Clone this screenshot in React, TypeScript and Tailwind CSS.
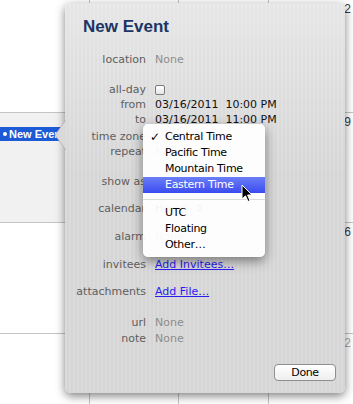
import React from 'react'

const weeks = [
    { h: 'h-[113px]', days: ['9', '10', '11', '12'] },
    { h: 'h-[110px]', days: ['16', '17', '18', '19'] },
    { h: 'h-[111px]', days: ['23', '24', '25', '26'] },
    { h: 'h-[80px]', days: ['30', '31', '1', '2'] },
]

const colWidths = ['w-[90px] border-r', 'w-[89px] border-r', 'w-[90px] border-r', 'w-[90px]']

function Calendar() {
    return (
        <div className="flex flex-col w-[359px]">
            {weeks.map((week, wi) => (
                <div key={wi} className={`flex ${week.h} ${wi < 3 ? 'border-b' : ''} border-[#c4c4c4]`}>
                    {week.days.map((day, di) => {
                        const faded = wi === 3 && di >= 2
                        const today = wi === 1 && di === 0
                        return (
                            <div
                                key={di}
                                className={`${colWidths[di]} border-[#c4c4c4] flex flex-col ${today ? 'bg-[#f1f1f1]' : 'bg-white'}`}
                            >
                                <div
                                    className={`h-[14px] pt-[2px] pr-[8px] text-right text-[12px] leading-[14px] font-['Liberation_Sans',sans-serif] ${faded ? 'text-[#a9a9a9]' : 'text-[#3a3a3a]'}`}
                                >
                                    {day}
                                </div>
                                {today && (
                                    <div className="h-[14px] flex items-center pl-[3px] bg-[#1d5ad6] text-white text-[11px] font-bold font-['Liberation_Sans',sans-serif] whitespace-nowrap overflow-hidden">
                                        <span className="w-[4px] h-[4px] rounded-full bg-white mr-[2px]" />
                                        New Event
                                    </div>
                                )}
                            </div>
                        )
                    })}
                </div>
            ))}
        </div>
    )
}

interface RowProps {
    label: string
    gap: string
    children?: React.ReactNode
}

function Row({ label, gap, children }: RowProps) {
    return (
        <div className={`flex h-[15px] items-center leading-[15px] ${gap}`}>
            <div className="w-[81px] text-right text-[#5e5e5e] whitespace-nowrap">{label}</div>
            <div className="ml-[9px] flex items-center whitespace-pre">{children}</div>
        </div>
    )
}

const None = () => <span className="text-[#8d8d8d]">None</span>

function TimeZoneMenu() {
    const items = ['Central Time', 'Pacific Time', 'Mountain Time', 'Eastern Time']
    const more = ['UTC', 'Floating', 'Other…']
    return (
        <div className="absolute left-[78px] top-[121px] w-[122px] h-[133px] pt-[5px] pb-[4px] rounded-[5px] bg-white/[0.94] shadow-[0_4px_12px_rgba(0,0,0,0.45)] text-[11px] tracking-[-0.3px] text-black">
            {items.map((item, i) => (
                <div
                    key={item}
                    className={`relative h-[16px] flex items-center pl-[22px] ${
                        i === 3 ? 'bg-[linear-gradient(to_bottom,#6b7ff7,#3a4bef)] text-white' : ''
                    }`}
                >
                    {i === 0 && <span className="absolute left-[7px] text-[12px]">✓</span>}
                    {item}
                </div>
            ))}
            <div className="h-[12px] flex items-center">
                <div className="w-full h-px bg-[#dcdcdc]" />
            </div>
            {more.map((item) => (
                <div key={item} className="h-[16px] flex items-center pl-[22px]">
                    {item}
                </div>
            ))}
        </div>
    )
}

function Popover() {
    return (
        <div className="absolute left-[65px] top-[3px] w-[280px] h-[390px] rounded-[6px] flex flex-col shadow-[0_3px_10px_rgba(0,0,0,0.5)] bg-[image:linear-gradient(to_bottom,rgba(255,255,255,0.4),rgba(255,255,255,0)_45%),repeating-linear-gradient(90deg,#dbdbdb_0px,#dbdbdb_2px,#d5d5d5_2px,#d5d5d5_4px)] text-[11px] font-['DejaVu_Sans',sans-serif]">
            <svg className="absolute left-[-10px] top-[117px]" width="11" height="30" viewBox="0 0 11 30">
                <polygon points="11,0 0,15 11,30" fill="#d9d9d9" />
                <polyline points="11,0 0,15 11,30" fill="none" stroke="#b4b4b4" strokeWidth="0.8" />
            </svg>
            <div className="pl-[18px] pt-[14px] h-[34px] text-[17px] leading-[20px] font-bold text-[#1c3463] font-['Liberation_Sans',sans-serif]">
                New Event
            </div>
            <div className="mt-[15px] flex flex-col text-[#111]">
                <Row label="location" gap="mt-0"><None /></Row>
                <Row label="all-day" gap="mt-[15px]">
                    <span className="w-[10px] h-[10px] rounded-[2px] border border-[#7b7b7b] bg-[linear-gradient(to_bottom,#ffffff,#e6e6e6)]" />
                </Row>
                <Row label="from" gap="mt-0">03/16/2011  10:00 PM</Row>
                <Row label="to" gap="mt-0">03/16/2011  11:00 PM</Row>
                <Row label="time zone" gap="mt-[2px]" />
                <Row label="repeat" gap="mt-0"><None /></Row>
                <Row label="show as" gap="mt-[15px]">Busy</Row>
                <Row label="calendar" gap="mt-[12px]"><span className="text-[#2b4a8a]">Home  ⇕</span></Row>
                <Row label="alarm" gap="mt-[13px]"><None /></Row>
                <Row label="invitees" gap="mt-[13px]">
                    <span className="text-[#2c1cf2] underline">Add Invitees…</span>
                </Row>
                <Row label="attachments" gap="mt-[12px]">
                    <span className="text-[#2c1cf2] underline">Add File…</span>
                </Row>
                <Row label="url" gap="mt-[16px]"><None /></Row>
                <Row label="note" gap="mt-[1px]"><None /></Row>
            </div>
            <div className="mt-auto flex justify-end pr-[9px] pb-[12px]">
                <button className="w-[62px] h-[17px] rounded-[4px] border border-[#8f8f8f] bg-[linear-gradient(to_bottom,#ffffff,#eeeeee)] text-[11px] leading-[15px] tracking-[-0.4px] text-black">
                    Done
                </button>
            </div>
            <TimeZoneMenu />
        </div>
    )
}

function Cursor() {
    return (
        <svg className="absolute left-[241px] top-[184px]" width="13" height="20" viewBox="0 0 13 20">
            <path
                d="M1 1 L1 15 L4.5 11.8 L7 17.5 L9 16.6 L6.6 11 L11 11 Z"
                fill="#000"
                stroke="#fff"
                strokeWidth="1"
                strokeLinejoin="round"
            />
        </svg>
    )
}

export default function App() {
    return (
        <div className="relative w-[353px] h-[404px] overflow-hidden bg-white font-['DejaVu_Sans',sans-serif]">
            <Calendar />
            <Popover />
            <Cursor />
        </div>
    )
}
